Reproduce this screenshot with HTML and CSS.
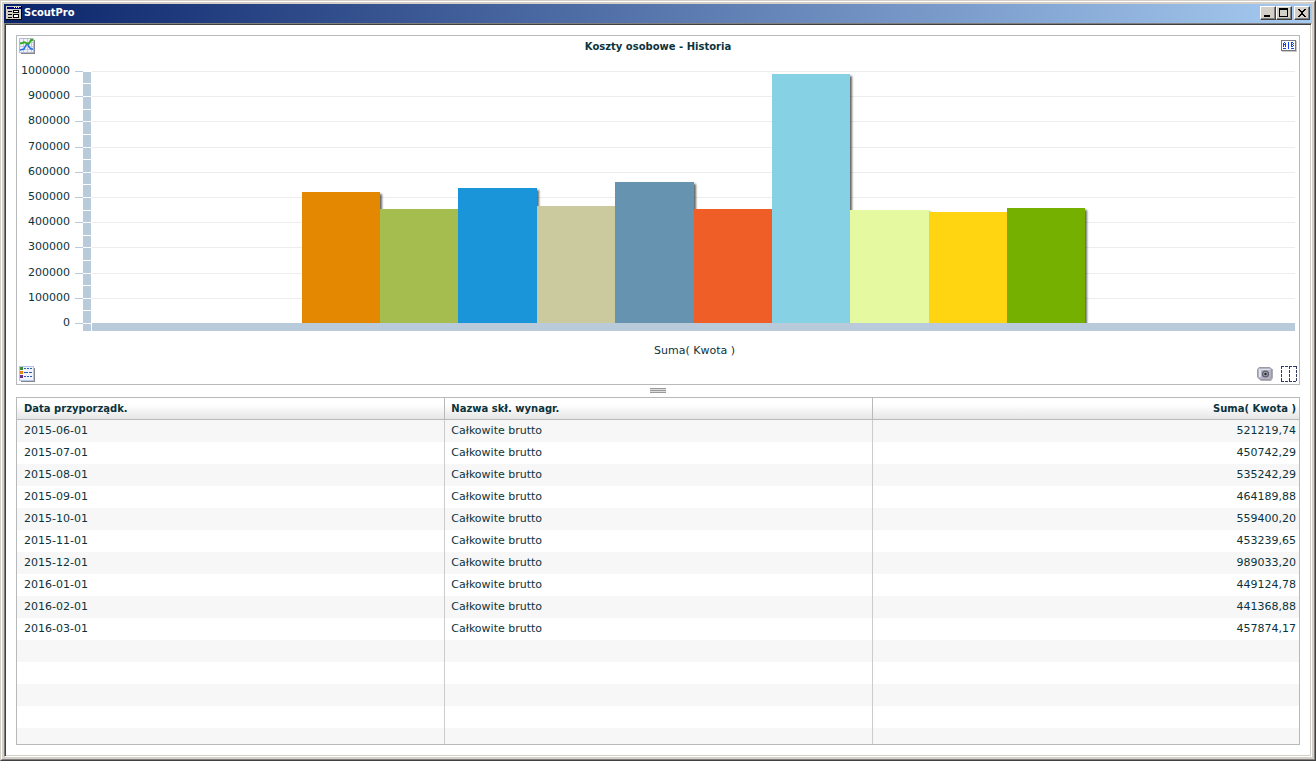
FILE: index.html
```html
<!DOCTYPE html>
<html lang="pl">
<head>
<meta charset="utf-8">
<title>ScoutPro</title>
<link rel="stylesheet" href="styles.css">
</head>
<body>
<div class="window">
<div class="window-inner">
  <header class="titlebar">
    <svg class="app-icon" width="16" height="14" viewBox="0 0 16 14" shape-rendering="crispEdges" aria-hidden="true">
      <path fill="#d4d0c8" d="M0 0h15v13H0z"/><path fill="#000" d="M15 0h1v14H0v-1h15z"/>
      <path fill="#00007b" d="M1 1h14v2H1z"/><path fill="#fff" d="M8 1h1v1H8zM10 1h1v1h-1zM12 1h1v1h-1z"/>
      <path fill="#000" d="M2 5h4v1H2zM2 8h4v1H2zM2 11h4v1H2zM7 4h6v3H7zM7 8h6v4H7z"/>
      <path fill="#fff" d="M8 5h4v1H8zM8 9h4v2H8z"/>
    </svg>
    <span class="app-name">ScoutPro</span>
    <button class="win-btn" aria-label="Minimalizuj"><svg width="12" height="10" shape-rendering="crispEdges"><path d="M2 7h6v2H2z"/></svg></button>
    <button class="win-btn" aria-label="Maksymalizuj"><svg width="12" height="10" shape-rendering="crispEdges"><path fill-rule="evenodd" d="M1 0h9v9H1zM2 2v6h7V2z"/></svg></button>
    <button class="win-btn close" aria-label="Zamknij"><svg width="12" height="10" shape-rendering="crispEdges"><path d="M2 1h2v1h1v1h2V2h1V1h2v1H9v1H8v1H7v2h1v1h1v1h1v1H8V8H7V7H5v1H4v1H2V8h1V7h1V6h1V4H4V3H3V2H2z"/></svg></button>
  </header>
  <main class="client">
    <section class="chart-panel">
      <div class="chart-head">
        <button class="tool" aria-label="Typ wykresu"><svg width="16" height="16" viewBox="0 0 16 16">
          <path fill="#85858f" d="M2 2h14v14H2z"/><path fill="#f0f1fa" stroke="#b5bad0" d="M.5.5h14v14H.5z"/>
          <path fill="none" stroke="#c3c8de" d="M4.500 1v13M8.500 1v13M12.500 1v13M1 4.500h13M1 8.500h13M1 11.500h13"/>
          <path fill="none" stroke="#2872e0" stroke-width="1.500" d="M1 12l4-1 2-4 2-1 1 3 2 2h2"/>
          <path fill="none" stroke="#32ac20" stroke-width="1.800" d="M1 5.500l3-.5 1-1 3 1.500 2 0 2-3.500 2 0"/>
        </svg></button>
        <h1 class="chart-title">Koszty osobowe - Historia</h1>
        <button class="tool" aria-label="Etykiety"><svg width="16" height="13" viewBox="0 0 16 13" shape-rendering="crispEdges">
          <path fill="#c9c9c9" d="M1 1h15v11H1z"/><path fill="#77777b" d="M0 0h15v11H0z"/><path fill="#fff" d="M1 1h13v9H1z"/>
          <path fill="#1542ee" d="M3 2h1v1H3zM2 3h1v4H2zM4 3h1v4H4zM3 4h1v1H3zM2 8h3v1H2zM7 2h1v7H7zM10 2h2v1h-2zM10 3h1v4h-1zM12 3h1v1h-1zM11 4h1v1h-1zM12 5h1v1h-1zM11 6h1v1h-1zM10 8h3v1h-3z"/>
        </svg></button>
      </div>
      <div class="chart">
        <div class="axis-labels"><span>1000000</span><span>900000</span><span>800000</span><span>700000</span><span>600000</span><span>500000</span><span>400000</span><span>300000</span><span>200000</span><span>100000</span><span>0</span></div>
        <svg class="axis-y" width="17" height="260" viewBox="0 0 17 260" shape-rendering="crispEdges" aria-hidden="true">
          <path fill="#b9cadb" d="M8 1h8v259H8z"/>
          <path stroke="#b9cadb" d="M0 .5h8M0 25.500h8M0 50.500h8M0 76.500h8M0 101.500h8M0 126.500h8M0 151.500h8M0 176.500h8M0 202.500h8M0 227.500h8M0 252.500h8"/>
          <path stroke="#fff" d="M8 12.500h8M8 25.500h8M8 38.500h8M8 50.500h8M8 63.500h8M8 76.500h8M8 88.500h8M8 101.500h8M8 113.500h8M8 126.500h8M8 139.500h8M8 151.500h8M8 164.500h8M8 176.500h8M8 189.500h8M8 202.500h8M8 214.500h8M8 227.500h8M8 239.500h8M8 252.500h8"/>
        </svg>
        <div class="plot">
          <div class="gridlines"><i></i><i></i><i></i><i></i><i></i><i></i><i></i><i></i><i></i><i></i></div>
          <div class="bars">
            <div class="bar orange" style="height:52.122%"></div>
            <div class="bar olive" style="height:45.074%"></div>
            <div class="bar blue" style="height:53.524%"></div>
            <div class="bar sand" style="height:46.419%"></div>
            <div class="bar steel" style="height:55.940%"></div>
            <div class="bar red" style="height:45.324%"></div>
            <div class="bar sky" style="height:98.903%"></div>
            <div class="bar lime" style="height:44.912%"></div>
            <div class="bar yellow" style="height:44.137%"></div>
            <div class="bar green" style="height:45.787%"></div>
          </div>
          <div class="axis-x"></div>
        </div>
      </div>
      <div class="axis-title">Suma( Kwota )</div>
      <div class="chart-foot">
        <button class="tool" aria-label="Legenda"><svg width="16" height="16" viewBox="0 0 16 16" shape-rendering="crispEdges">
          <path fill="#85858f" d="M2 2h14v14H2z"/><path fill="#b4c5e6" d="M0 0h15v15H0z"/><path fill="#eef3fd" d="M1 1h13v13H1z"/>
          <path fill="#438b31" d="M1 1h3v3H1z"/><path fill="#e58312" d="M1 5h3v3H1z"/><path fill="#653090" d="M1 9h3v3H1z"/>
          <path stroke="#2d5cb0" stroke-dasharray="2 1" d="M5 2.500h8M5 10.500h8"/><path stroke="#2d5cb0" stroke-dasharray="4 1" d="M5 6.500h8"/>
        </svg></button>
        <span class="spacer"></span>
        <button class="tool" aria-label="Zrzut obrazu"><svg width="16" height="14" viewBox="0 0 16 14">
          <path fill="#77777f" d="M2 2h14v9l-2 3H4l-3-3z" opacity=".6"/>
          <path fill="#b4b4c4" stroke="#9a9aa8" d="M.5 2.500L2 .500h11l1.500 1.500v8L13 12.500H3L.5 10z"/>
          <path fill="#e2e2ec" d="M2 2h11v1H2zM2 3h2v7H2z"/>
          <circle cx="8.500" cy="7" r="3.600" fill="#60606c"/><circle cx="8.500" cy="7" r="2.300" fill="#a4a4b2"/><circle cx="8.500" cy="7" r="1.200" fill="#222"/>
        </svg></button>
        <button class="tool" aria-label="Układ"><svg width="16" height="16" viewBox="0 0 16 16" shape-rendering="crispEdges">
          <path fill="none" stroke="#303868" stroke-dasharray="3 1" d="M0 .500h16M0 15.500h16M.500 0v16M15.500 0v16M8.500 0v16"/>
        </svg></button>
      </div>
    </section>
    <div class="splitter" role="separator"><span class="grip"></span></div>
    <section class="grid-panel">
      <table class="grid">
        <thead><tr><th>Data przyporządk.</th><th>Nazwa skł. wynagr.</th><th class="num">Suma( Kwota )</th></tr></thead>
        <tbody>
          <tr><td>2015-06-01</td><td>Całkowite brutto</td><td class="num">521219,74</td></tr>
          <tr><td>2015-07-01</td><td>Całkowite brutto</td><td class="num">450742,29</td></tr>
          <tr><td>2015-08-01</td><td>Całkowite brutto</td><td class="num">535242,29</td></tr>
          <tr><td>2015-09-01</td><td>Całkowite brutto</td><td class="num">464189,88</td></tr>
          <tr><td>2015-10-01</td><td>Całkowite brutto</td><td class="num">559400,20</td></tr>
          <tr><td>2015-11-01</td><td>Całkowite brutto</td><td class="num">453239,65</td></tr>
          <tr><td>2015-12-01</td><td>Całkowite brutto</td><td class="num">989033,20</td></tr>
          <tr><td>2016-01-01</td><td>Całkowite brutto</td><td class="num">449124,78</td></tr>
          <tr><td>2016-02-01</td><td>Całkowite brutto</td><td class="num">441368,88</td></tr>
          <tr><td>2016-03-01</td><td>Całkowite brutto</td><td class="num">457874,17</td></tr>
          <tr><td></td><td></td><td></td></tr>
          <tr><td></td><td></td><td></td></tr>
          <tr><td></td><td></td><td></td></tr>
          <tr><td></td><td></td><td></td></tr>
          <tr><td></td><td></td><td></td></tr>
        </tbody>
      </table>
    </section>
  </main>
</div>
</div>
</body>
</html>
```
FILE: styles.css
```css
* { box-sizing: border-box; }
body {
  margin: 0;
  font: 11px/14px Verdana, "DejaVu Sans", sans-serif;
  color: #0b333c;
}
.window {
  height: 100vh;
  display: flex;
  border: 1px solid;
  border-color: #d4d0c8 #404040 #404040 #d4d0c8;
}
.window-inner {
  flex: 1;
  min-width: 0;
  display: flex;
  flex-direction: column;
  padding: 2px;
  background: #d4d0c8;
  border: 1px solid;
  border-color: #fff #808080 #808080 #fff;
}
.titlebar {
  display: flex;
  align-items: center;
  height: 19px;
  padding: 0 2px 1px;
  background: linear-gradient(to right, #0a246a, #a6caf0);
  color: #fff;
  font-weight: bold;
}
.app-icon { margin-right: 2px; }
.app-name {
  flex: 1;
  font-family: Tahoma, "DejaVu Sans Condensed", "DejaVu Sans", sans-serif;
}
.win-btn {
  display: flex;
  width: 16px;
  height: 14px;
  padding: 1px;
  background: #d4d0c8;
  border: 1px solid;
  border-color: #fff #404040 #404040 #fff;
  box-shadow: inset -1px -1px #808080;
}
.close { margin-left: 2px; }
.client {
  flex: 1;
  min-height: 0;
  display: flex;
  flex-direction: column;
  padding: 11px 11px 11px;
  background: #fff;
  border: 1px solid;
  border-color: #808080 #fff #fff #808080;
  box-shadow: inset 1px 1px #404040, inset -1px -1px #d4d0c8;
}
.chart-panel {
  border: 1px solid #b7babc;
  padding: 2px 2px 1px;
}
.chart-head, .chart-foot {
  display: flex;
  align-items: flex-start;
}
.chart-head { height: 33px; }
.chart-title {
  flex: 1;
  margin: 2px 0 0;
  font-size: 10px;
  text-align: center;
}
.chart-head .tool:last-child { padding: 2px 0 0; }
.tool {
  display: flex;
  padding: 0;
  border: 0;
  background: none;
}
.chart {
  display: grid;
  grid-template-columns: 51px 22px 1fr;
  height: 260px;
  padding-right: 2px;
}
.axis-labels {
  display: flex;
  flex-direction: column;
  justify-content: space-between;
  align-self: start;
  height: 266px;
  margin-top: -7px;
  text-align: right;
}
.axis-y { justify-self: end; }
.plot {
  display: grid;
  grid-template-rows: 252px 8px;
}
.gridlines, .bars { grid-area: 1 / 1; }
.gridlines {
  display: grid;
  grid-template-rows: repeat(10, 1fr);
}
.gridlines i { border-top: 1px solid #ededed; }
.bars {
  display: flex;
  align-items: flex-end;
  justify-content: center;
  overflow: hidden;
}
.bar {
  width: 6.517%;
  box-shadow: 2px 2px 2px rgba(0, 0, 0, 0.6);
}
.orange { background: #e48701; }
.olive { background: #a5bc4e; }
.blue { background: #1b95d9; }
.sand { background: #caca9e; }
.steel { background: #6693b0; }
.red { background: #f05e27; }
.sky { background: #86d1e4; }
.lime { background: #e4f9a0; }
.yellow { background: #ffd512; }
.green { background: #75b000; }
.axis-x { background: #b9cadb; }
.axis-title {
  margin: 13px 0 7px 73px;
  text-align: center;
}
.chart-foot {
  align-items: center;
  gap: 8px;
  height: 18px;
}
.spacer { flex: 1; }
.splitter {
  display: flex;
  justify-content: center;
  align-items: flex-start;
  height: 12px;
  padding-top: 3px;
}
.grip {
  width: 16px;
  height: 5px;
  border: 1px solid #999;
  border-width: 1px 0;
  background: linear-gradient(#ddd 1px, #999 1px, #999 2px, #ddd 2px);
}
.grid-panel {
  flex: 1;
  min-height: 0;
  overflow: hidden;
  border: 1px solid #b7babc;
}
.grid {
  width: 100%;
  table-layout: fixed;
  border-spacing: 0;
}
.grid th, .grid td {
  height: 22px;
  padding: 0 3px 0 7px;
  border-left: 1px solid #ccc;
  text-align: left;
}
.grid th:first-child, .grid td:first-child { border-left: 0; }
.grid th + th, .grid td + td { padding-left: 6px; }
.grid th {
  border-color: #b7babc;
  border-bottom: 1px solid #b7babc;
  background: linear-gradient(#fff 30%, #e6e6e6);
  font-size: 10px;
}
.grid tbody tr:nth-child(odd) { background: #f7f7f7; }
.grid .num { text-align: right; }
```
